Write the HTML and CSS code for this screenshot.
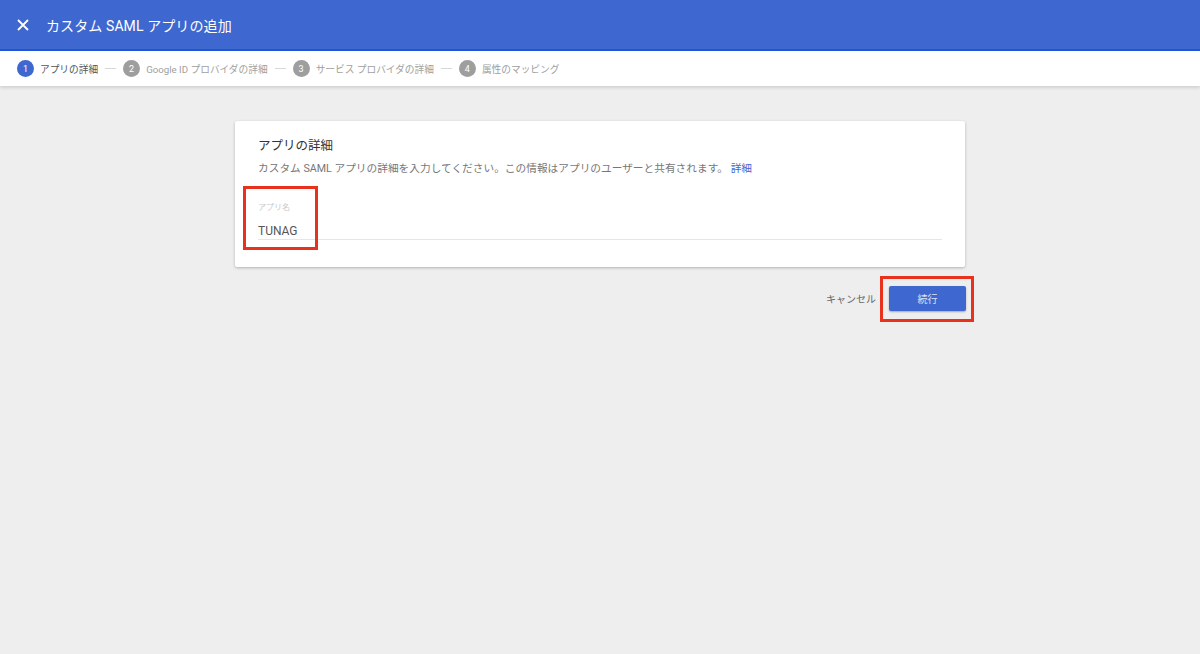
FILE: index.html
```html
<!DOCTYPE html>
<html lang="ja">
<head>
<meta charset="utf-8">
<link rel="stylesheet" href="styles.css">
</head>
<body>
<div class="app">
  <header class="topbar">
    <svg class="close" width="12" height="12" viewBox="0 0 12 12"><path d="M1 1L11 11M11 1L1 11" stroke="#fff" stroke-width="1.8"/></svg>
    <h1 class="title">カスタム SAML アプリの追加</h1>
  </header>
  <nav class="stepper">
    <div class="step active"><span class="num">1</span><span class="label">アプリの詳細</span></div>
    <span class="dash"></span>
    <div class="step"><span class="num">2</span><span class="label">Google ID プロバイダの詳細</span></div>
    <span class="dash"></span>
    <div class="step"><span class="num">3</span><span class="label">サービス プロバイダの詳細</span></div>
    <span class="dash"></span>
    <div class="step"><span class="num">4</span><span class="label">属性のマッピング</span></div>
  </nav>
  <main class="content">
    <section class="card">
      <h2 class="card-title">アプリの詳細</h2>
      <p class="card-desc">カスタム SAML アプリの詳細を入力してください。この情報はアプリのユーザーと共有されます。 <a class="link">詳細</a></p>
      <div class="field">
        <div class="field-label">アプリ名</div>
        <div class="field-value">TUNAG</div>
        <span class="highlight hl-field"></span>
      </div>
    </section>
    <div class="actions">
      <span class="cancel">キャンセル</span>
      <div class="btn-wrap">
        <button class="primary">続行</button>
        <span class="highlight hl-btn"></span>
      </div>
    </div>
  </main>
</div>
</body>
</html>
```
FILE: styles.css
```css
* { box-sizing: border-box; }
html, body { margin: 0; padding: 0; }
body {
  width: 1200px; height: 654px; overflow: hidden;
  font-family: Roboto, "Noto Sans CJK JP", sans-serif;
  background: #eeeeee;
}
.app { height: 654px; display: flex; flex-direction: column; }
.topbar {
  height: 51px; background: #3e67d0; border-bottom: 2px solid #1f55d6;
  display: flex; align-items: center; padding-left: 17px; flex-shrink: 0;
}
.close { margin-right: 17px; }
.title { margin: 0; font-size: 14px; font-weight: 400; color: #fff; letter-spacing: 0.1px; }
.stepper {
  height: 35px; background: #fff; display: flex; align-items: center;
  padding-left: 17px; box-shadow: 0 2px 3px rgba(0,0,0,0.12); flex-shrink: 0;
  position: relative; z-index: 1;
}
.step { display: flex; align-items: center; }
.num {
  width: 17px; height: 17px; border-radius: 50%; background: #9e9e9e;
  color: #fff; font-size: 9px; display: flex; align-items: center; justify-content: center;
  margin-right: 6px;
}
.step.active .num { background: #3e67d0; }
.label { font-size: 9.7px; color: #a0a0a0; }
.step.active .label { color: #555; }
.dash { width: 11px; height: 1px; background: #d8d8d8; margin: 0 7px; }
.content { width: 740px; margin: 35px 0 0 235px; }
.card {
  width: 730px; background: #fff; border-radius: 2px;
  box-shadow: 0 1px 3px rgba(0,0,0,0.25);
  padding: 17px 23px 27px 23px;
}
.card-title { margin: 0; font-size: 12.5px; font-weight: 400; color: #333; line-height: 16px; }
.card-desc { margin: 8px 0 0; font-size: 10.7px; color: #777; line-height: 14px; }
.link { color: #3e67d0; }
.field { position: relative; margin-top: 26px; border-bottom: 1px solid #e6e6e6; padding-bottom: 1px; }
.field-label { font-size: 8px; color: #cacaca; line-height: 11px; }
.field-value { font-size: 12px; color: #555; margin-top: 11px; line-height: 14px; }
.highlight { position: absolute; border: 3px solid #e8321e; }
.hl-field { left: -15px; top: -16px; width: 75px; height: 64px; }
.actions { display: flex; justify-content: flex-end; align-items: center; margin-top: 19px; padding-right: 9px; }
.cancel { font-size: 10px; color: #666; margin-right: 13px; }
.btn-wrap { position: relative; }
.primary {
  width: 77px; height: 25px; border: none; border-radius: 2px; background: #3e67d0;
  color: #dde4f6; font-size: 10px; font-family: inherit;
  box-shadow: 0 1px 2px rgba(0,0,0,0.3); display: block;
}
.hl-btn { left: -9px; top: -10px; width: 94px; height: 46px; }
```
